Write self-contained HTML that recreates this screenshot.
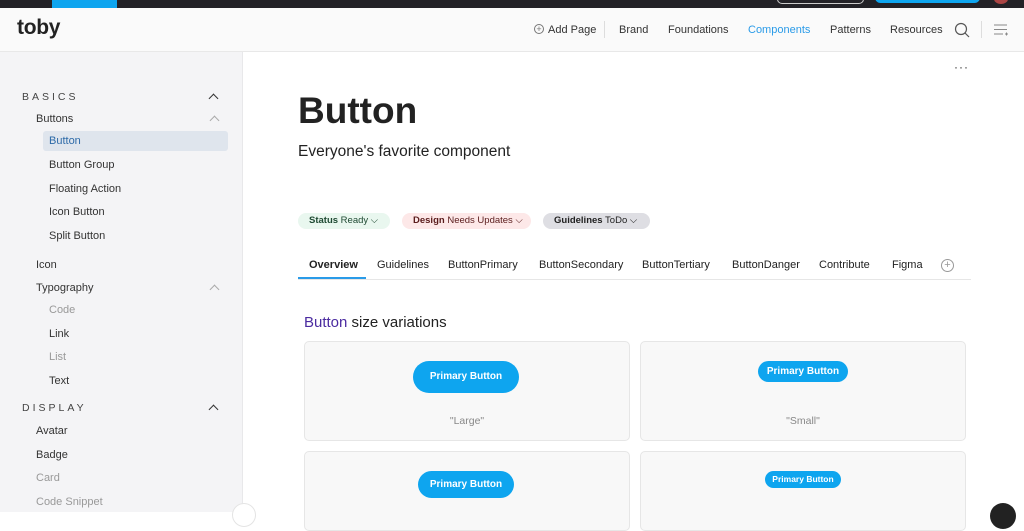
<!DOCTYPE html>
<html><head><style>
*{margin:0;padding:0;box-sizing:border-box}
body{width:1024px;height:512px;overflow:hidden;background:#fff;font-family:"Liberation Sans",sans-serif;position:relative;color:#222}
.a{position:absolute;white-space:nowrap}
.top{left:0;top:0;width:1024px;height:8px;background:#232227}
.hdr{left:0;top:8px;width:1024px;height:44px;background:#fafafa;border-bottom:1px solid #e8e8e8}
.nav{font-size:11px;color:#333;top:24px}
.side{left:0;top:52px;width:243px;height:460px;background:#f4f4f6;border-right:1px solid #e8e8ea}
.s{font-size:11px;color:#333}
.g{color:#999}
.sec{font-size:10.5px;letter-spacing:3px;color:#444}
.chev{width:7px;height:7px;border-left:1.3px solid #333;border-top:1.3px solid #333;transform:rotate(45deg)}
.chev.l{border-color:#aaa}
.pill{top:213px;height:16px;border-radius:8px;font-size:9.5px;line-height:16px;padding:0 11px}
.tab{top:259px;font-size:11px;color:#222}
.card{background:#f8f8f8;border:1px solid #e6e6e6;border-radius:5px}
.btn{background:#0ea5ef;color:#fff;font-weight:bold;border-radius:20px;text-align:center}
</style></head><body>
<div class="a top"></div>
<div class="a" style="left:52px;top:0;width:65px;height:8px;background:#0ea5ef"></div>
<div class="a" style="left:777px;top:-6px;width:87px;height:10px;border:1px solid #ccc;border-radius:6px"></div>
<div class="a" style="left:875px;top:-8px;width:105px;height:11px;background:#0ea5ef;border-radius:6px"></div>
<div class="a" style="left:994px;top:-6px;width:14px;height:10px;background:#a44;border-radius:50%"></div>
<div class="a hdr"></div>
<div class="a" style="left:17px;top:16px;font-size:21px;font-weight:900;color:#222;letter-spacing:-0.3px">toby</div>
<div class="a" style="left:534px;top:24px;width:10px;height:10px;border:1px solid #777;border-radius:50%;font-size:9px;line-height:8px;text-align:center;color:#777">+</div>
<div class="a nav" style="left:548px">Add Page</div>
<div class="a" style="left:604px;top:21px;width:1px;height:17px;background:#ddd"></div>
<div class="a nav" style="left:619px">Brand</div>
<div class="a nav" style="left:668px">Foundations</div>
<div class="a nav" style="left:748px;color:#2a9be8">Components</div>
<div class="a nav" style="left:830px">Patterns</div>
<div class="a nav" style="left:890px">Resources</div>
<svg class="a" style="left:954px;top:22px" width="16" height="16"><circle cx="7" cy="7" r="5.5" fill="none" stroke="#555" stroke-width="1.2"/><line x1="11" y1="11" x2="15" y2="15" stroke="#555" stroke-width="1.2"/></svg>
<div class="a" style="left:981px;top:21px;width:1px;height:17px;background:#ddd"></div>
<svg class="a" style="left:993px;top:24px" width="16" height="12"><path d="M1 1H14M1 5.5H14M1 10H10M12 10H15M13.5 8.5V11.5" stroke="#888" stroke-width="1"/></svg>

<div class="a side"></div>
<div class="a sec" style="left:22px;top:91px">BASICS</div>
<div class="a chev" style="left:210px;top:95px"></div>
<div class="a s" style="left:36px;top:113px">Buttons</div>
<div class="a chev l" style="left:211px;top:117px"></div>
<div class="a" style="left:43px;top:131px;width:185px;height:20px;background:#dfe5ed;border-radius:3px"></div>
<div class="a s" style="left:49px;top:135px;color:#2d6aa8">Button</div>
<div class="a s" style="left:49px;top:159px">Button Group</div>
<div class="a s" style="left:49px;top:183px">Floating Action</div>
<div class="a s" style="left:49px;top:206px">Icon Button</div>
<div class="a s" style="left:49px;top:230px">Split Button</div>
<div class="a s" style="left:36px;top:259px">Icon</div>
<div class="a s" style="left:36px;top:282px">Typography</div>
<div class="a chev l" style="left:211px;top:286px"></div>
<div class="a s g" style="left:49px;top:304px">Code</div>
<div class="a s" style="left:49px;top:328px">Link</div>
<div class="a s g" style="left:49px;top:351px">List</div>
<div class="a s" style="left:49px;top:375px">Text</div>
<div class="a sec" style="left:22px;top:402px">DISPLAY</div>
<div class="a chev" style="left:210px;top:406px"></div>
<div class="a s" style="left:36px;top:425px">Avatar</div>
<div class="a s" style="left:36px;top:449px">Badge</div>
<div class="a s g" style="left:36px;top:472px">Card</div>
<div class="a s g" style="left:36px;top:496px">Code Snippet</div>
<div class="a" style="left:232px;top:503px;width:24px;height:24px;border-radius:50%;background:#fff;border:1px solid #e4e4e4"></div>

<div class="a" style="left:954px;top:60px;font-size:12px;color:#333;letter-spacing:1px">···</div>
<div class="a" style="left:298px;top:90px;font-size:37px;font-weight:900;color:#222">Button</div>
<div class="a" style="left:298px;top:143px;font-size:15.5px;color:#222">Everyone's favorite component</div>
<div class="a pill" style="left:298px;width:92px;background:#e9f7ef;color:#1f4a33"><b>Status</b> Ready ⌵</div>
<div class="a pill" style="left:402px;width:129px;background:#fde8e8;color:#5a1c1c"><b>Design</b> Needs Updates ⌵</div>
<div class="a pill" style="left:543px;width:107px;background:#dedee3;color:#222"><b>Guidelines</b> ToDo ⌵</div>
<div class="a tab" style="left:309px;font-weight:bold">Overview</div>
<div class="a" style="left:298px;top:277px;width:68px;height:2px;background:#2a9be8"></div>
<div class="a" style="left:298px;top:279px;width:673px;height:1px;background:#e6e6e6"></div>
<div class="a tab" style="left:377px">Guidelines</div>
<div class="a tab" style="left:448px">ButtonPrimary</div>
<div class="a tab" style="left:539px">ButtonSecondary</div>
<div class="a tab" style="left:642px">ButtonTertiary</div>
<div class="a tab" style="left:732px">ButtonDanger</div>
<div class="a tab" style="left:819px">Contribute</div>
<div class="a tab" style="left:892px">Figma</div>
<div class="a" style="left:941px;top:259px;width:13px;height:13px;border:1px solid #999;border-radius:50%;font-size:11px;line-height:11px;text-align:center;color:#999">+</div>
<div class="a" style="left:304px;top:314px;font-size:15px;color:#222"><span style="color:#4b2ba0">Button</span> size variations</div>
<div class="a card" style="left:304px;top:341px;width:326px;height:100px"></div>
<div class="a card" style="left:640px;top:341px;width:326px;height:100px"></div>
<div class="a card" style="left:304px;top:451px;width:326px;height:80px"></div>
<div class="a card" style="left:640px;top:451px;width:326px;height:80px"></div>
<div class="a btn" style="left:413px;top:361px;width:106px;height:32px;line-height:32px;font-size:10px">Primary Button</div>
<div class="a" style="left:304px;top:415px;width:326px;text-align:center;font-size:10.5px;color:#888">"Large"</div>
<div class="a btn" style="left:758px;top:361px;width:90px;height:21px;line-height:21px;font-size:10px">Primary Button</div>
<div class="a" style="left:640px;top:415px;width:326px;text-align:center;font-size:10.5px;color:#888">"Small"</div>
<div class="a btn" style="left:418px;top:471px;width:96px;height:27px;line-height:27px;font-size:10px">Primary Button</div>
<div class="a btn" style="left:765px;top:471px;width:76px;height:17px;line-height:17px;font-size:8.5px">Primary Button</div>
<div class="a" style="left:990px;top:503px;width:26px;height:26px;border-radius:50%;background:#222"></div>
</body></html>
